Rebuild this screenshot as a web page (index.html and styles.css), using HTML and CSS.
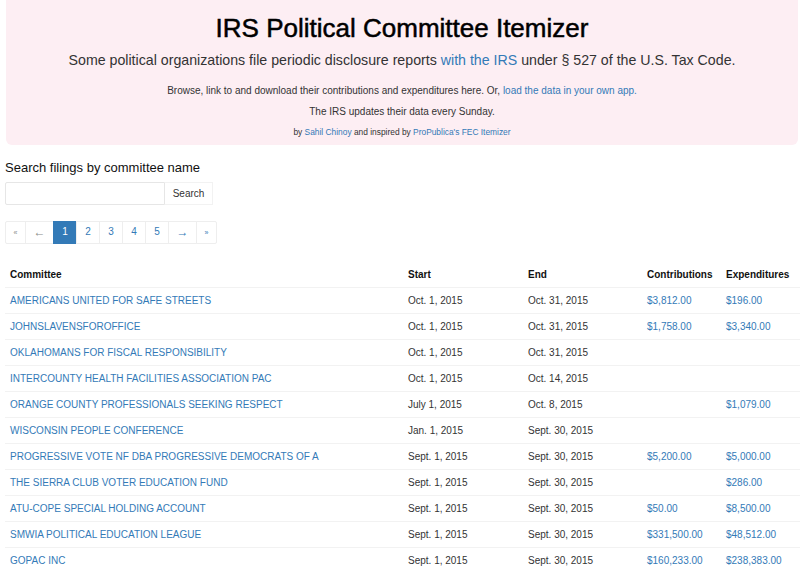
FILE: index.html
```html
<!DOCTYPE html>
<html lang="en">
<head>
<meta charset="utf-8">
<title>IRS Political Committee Itemizer</title>
<link rel="stylesheet" href="styles.css">
</head>
<body>
<div class="container">
  <header class="jumbotron">
    <h1 class="title">IRS Political Committee Itemizer</h1>
    <p class="lead">Some political organizations file periodic disclosure reports <a href="#">with the IRS</a> under § 527 of the U.S. Tax Code.</p>
    <p class="info">Browse, link to and download their contributions and expenditures here. Or, <a href="#">load the data in your own app.</a></p>
    <p class="info">The IRS updates their data every Sunday.</p>
    <p class="credit">by <a href="#">Sahil Chinoy</a> and inspired by <a href="#">ProPublica's FEC Itemizer</a></p>
  </header>

  <h2 class="search-title">Search filings by committee name</h2>
  <form class="search">
    <input class="search-input" type="text">
    <button class="search-btn" type="button">Search</button>
  </form>

  <nav class="pagination">
    <span class="page disabled small">«</span>
    <span class="page disabled wide">←</span>
    <span class="page active">1</span>
    <a class="page" href="#">2</a>
    <a class="page" href="#">3</a>
    <a class="page" href="#">4</a>
    <a class="page" href="#">5</a>
    <a class="page wide" href="#">→</a>
    <a class="page small" href="#">»</a>
  </nav>

  <table class="filings">
    <thead>
      <tr><th class="c-name">Committee</th><th class="c-start">Start</th><th class="c-end">End</th><th class="c-contrib">Contributions</th><th>Expenditures</th></tr>
    </thead>
    <tbody>
      <tr><td><a href="#">AMERICANS UNITED FOR SAFE STREETS</a></td><td>Oct. 1, 2015</td><td>Oct. 31, 2015</td><td><a href="#">$3,812.00</a></td><td><a href="#">$196.00</a></td></tr>
      <tr><td><a href="#">JOHNSLAVENSFOROFFICE</a></td><td>Oct. 1, 2015</td><td>Oct. 31, 2015</td><td><a href="#">$1,758.00</a></td><td><a href="#">$3,340.00</a></td></tr>
      <tr><td><a href="#">OKLAHOMANS FOR FISCAL RESPONSIBILITY</a></td><td>Oct. 1, 2015</td><td>Oct. 31, 2015</td><td></td><td></td></tr>
      <tr><td><a href="#">INTERCOUNTY HEALTH FACILITIES ASSOCIATION PAC</a></td><td>Oct. 1, 2015</td><td>Oct. 14, 2015</td><td></td><td></td></tr>
      <tr><td><a href="#">ORANGE COUNTY PROFESSIONALS SEEKING RESPECT</a></td><td>July 1, 2015</td><td>Oct. 8, 2015</td><td></td><td><a href="#">$1,079.00</a></td></tr>
      <tr><td><a href="#">WISCONSIN PEOPLE CONFERENCE</a></td><td>Jan. 1, 2015</td><td>Sept. 30, 2015</td><td></td><td></td></tr>
      <tr><td><a href="#">PROGRESSIVE VOTE NF DBA PROGRESSIVE DEMOCRATS OF A</a></td><td>Sept. 1, 2015</td><td>Sept. 30, 2015</td><td><a href="#">$5,200.00</a></td><td><a href="#">$5,000.00</a></td></tr>
      <tr><td><a href="#">THE SIERRA CLUB VOTER EDUCATION FUND</a></td><td>Sept. 1, 2015</td><td>Sept. 30, 2015</td><td></td><td><a href="#">$286.00</a></td></tr>
      <tr><td><a href="#">ATU-COPE SPECIAL HOLDING ACCOUNT</a></td><td>Sept. 1, 2015</td><td>Sept. 30, 2015</td><td><a href="#">$50.00</a></td><td><a href="#">$8,500.00</a></td></tr>
      <tr><td><a href="#">SMWIA POLITICAL EDUCATION LEAGUE</a></td><td>Sept. 1, 2015</td><td>Sept. 30, 2015</td><td><a href="#">$331,500.00</a></td><td><a href="#">$48,512.00</a></td></tr>
      <tr><td><a href="#">GOPAC INC</a></td><td>Sept. 1, 2015</td><td>Sept. 30, 2015</td><td><a href="#">$160,233.00</a></td><td><a href="#">$238,383.00</a></td></tr>
    </tbody>
  </table>
</div>
</body>
</html>
```

FILE: styles.css
```css
* { box-sizing: border-box; }
html, body { margin: 0; padding: 0; background: #fff; }
body {
  font-family: "Liberation Sans", Arial, Helvetica, sans-serif;
  color: #333;
  font-size: 10px;
  line-height: 1.43;
}
a { color: #337ab7; text-decoration: none; }

.container { padding: 0 0 0 5px; }

.jumbotron {
  margin: 0 2px 0 1px;
  background: #fdeef3;
  border-radius: 0 0 6px 6px;
  text-align: center;
  padding: 12px 0 6px;
}
.title {
  margin: 0;
  font-size: 26px;
  font-weight: normal;
  -webkit-text-stroke: 0.5px #000;
  color: #000;
  line-height: 32px;
}
.lead {
  margin: 6px 0 13px;
  font-size: 14.2px;
  line-height: 20px;
  color: #333;
}
.info { margin: 0 0 5px; font-size: 10px; line-height: 16px; }
.credit { margin: 0; font-size: 8.4px; line-height: 14px; }

.search-title {
  margin: 14px 0 5px;
  font-size: 13px;
  font-weight: normal;
  color: #111;
  line-height: 18px;
}
.search { display: flex; margin: 0; }
.search-input {
  width: 160px;
  height: 23px;
  border: 1px solid #e6e6e6;
  border-radius: 2px 0 0 2px;
  margin: 0;
  padding: 0 4px;
  font: inherit;
}
.search-btn {
  height: 23px;
  width: 48px;
  border: 1px solid #f2f2f2;
  border-left: none;
  background: #fff;
  margin: 0;
  padding: 0;
  font-family: inherit;
  font-size: 10px;
  color: #333;
}

.pagination {
  display: flex;
  margin: 16px 0 18px;
}
.page {
  height: 23px;
  width: 24px;
  display: flex;
  align-items: center;
  justify-content: center;
  border: 1px solid #eee;
  margin-left: -1px;
  color: #337ab7;
  font-size: 10px;
  background: #fff;
}
.page:first-child { margin-left: 0; border-radius: 2px 0 0 2px; }
.page:last-child { border-radius: 0 2px 2px 0; }
.page.small { width: 21px; font-size: 7px; }
.page.wide { width: 29px; font-size: 12px; }
.page.disabled { color: #888; }
.page.active { background: #337ab7; border-color: #337ab7; color: #fff; }

.filings {
  width: 100%;
  border-collapse: collapse;
  margin-top: 16px;
}
.filings th, .filings td {
  text-align: left;
  padding: 5px 5px;
  line-height: 15px;
  font-size: 10px;
  border-top: 1px solid #f2f2f2;
  vertical-align: top;
  white-space: nowrap;
}
.filings th {
  font-weight: bold;
  color: #111;
  border-top: none;
  padding-top: 5px;
  padding-bottom: 5px;
}
.filings thead tr { border-bottom: 1px solid #f2f2f2; }
.c-name { width: 398px; }
.c-start { width: 120px; }
.c-end { width: 119px; }
.c-contrib { width: 79px; }
```
